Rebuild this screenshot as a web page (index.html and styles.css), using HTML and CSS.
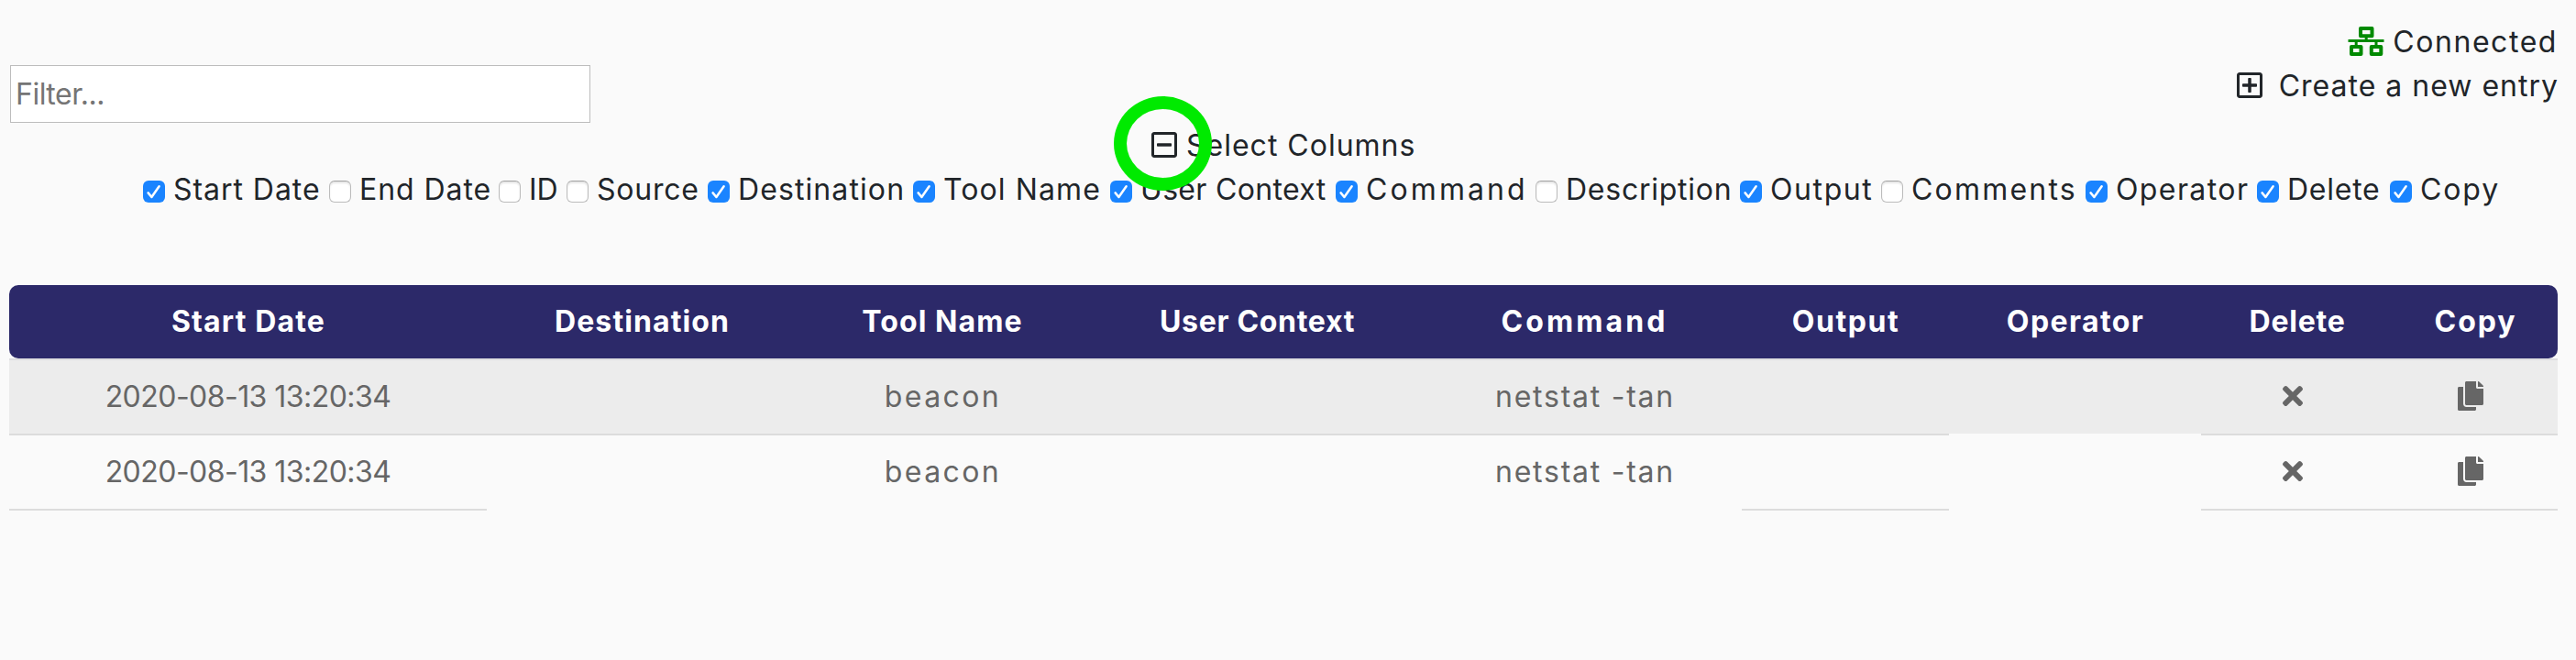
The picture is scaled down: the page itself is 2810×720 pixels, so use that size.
FILE: index.html
```html
<!DOCTYPE html>
<html lang="en">
<head>
<meta charset="utf-8">
<title>Operator log</title>
<link rel="stylesheet" href="styles.css">
</head>
<body>
<svg class="sprite" aria-hidden="true">
  <symbol id="check" viewBox="0 0 24 24"><path d="M5.6 13.4l3.8 4.6L17.6 6.2" fill="none" stroke="#fff" stroke-width="2.5" stroke-linecap="round" stroke-linejoin="round"/></symbol>
  <symbol id="times" viewBox="0 0 352 512"><path d="M242.72 256l100.07-100.07c12.28-12.28 12.28-32.19 0-44.48l-22.24-22.24c-12.28-12.28-32.19-12.28-44.48 0L176 189.28 75.93 89.21c-12.28-12.28-32.19-12.28-44.48 0L9.21 111.45c-12.28 12.28-12.28 32.19 0 44.48L109.28 256 9.21 356.07c-12.28 12.28-12.28 32.19 0 44.48l22.24 22.24c12.28 12.28 32.2 12.28 44.48 0L176 322.72l100.07 100.07c12.28 12.28 32.2 12.28 44.48 0l22.24-22.24c12.28-12.28 12.28-32.19 0-44.48L242.72 256z"/></symbol>
  <symbol id="copy" viewBox="0 0 448 512"><path d="M320 448v40c0 13.255-10.745 24-24 24H24c-13.255 0-24-10.745-24-24V120c0-13.255 10.745-24 24-24h72v296c0 30.879 25.121 56 56 56h168zm0-344V0H152c-13.255 0-24 10.745-24 24v368c0 13.255 10.745 24 24 24h272c13.255 0 24-10.745 24-24V128H344c-13.2 0-24-10.8-24-24zm120.971-31.029L375.029 7.029A24 24 0 0 0 358.059 0H352v96h96v-6.059a24 24 0 0 0-7.029-16.97z"/></symbol>
</svg>

<header class="top">
  <input class="filter" type="text" placeholder="Filter...">
  <div class="status">
    <div class="line">
      <svg class="net" viewBox="0 0 40 32"><g fill="none" stroke="#008a00" stroke-width="4" stroke-linejoin="round"><path d="M14 2h12.5v8.2H14zM4 22h10.5v8H4zM25.8 22h10.5v8H25.8z"/><path d="M0.5 15.5h39M20.2 11v4M9.2 16v5M31 16v5" stroke-width="3" stroke-linecap="butt"/></g></svg>
      <span class="connected">Connected</span>
    </div>
    <div class="line">
      <svg class="square" viewBox="0 0 448 512"><path d="M352 240v32c0 6.600-5.400 12-12 12h-88v88c0 6.600-5.400 12-12 12h-32c-6.600 0-12-5.400-12-12v-88h-88c-6.600 0-12-5.400-12-12v-32c0-6.600 5.400-12 12-12h88v-88c0-6.600 5.400-12 12-12h32c6.600 0 12 5.400 12 12v88h88c6.600 0 12 5.400 12 12zm96-160v352c0 26.500-21.500 48-48 48H48c-26.500 0-48-21.500-48-48V80c0-26.500 21.500-48 48-48h352c26.500 0 48 21.500 48 48zm-48 346V86c0-3.300-2.700-6-6-6H54c-3.300 0-6 2.700-6 6v340c0 3.300 2.700 6 6 6h340c3.300 0 6-2.700 6-6z"/></svg>
      <span class="create">Create a new entry</span>
    </div>
  </div>
</header>

<div class="toggle">
  <span class="toggle-icon">
    <svg class="square" viewBox="0 0 448 512"><path d="M108 284c-6.600 0-12-5.400-12-12v-32c0-6.600 5.400-12 12-12h232c6.600 0 12 5.400 12 12v32c0 6.600-5.400 12-12 12H108zM448 80v352c0 26.500-21.500 48-48 48H48c-26.500 0-48-21.500-48-48V80c0-26.500 21.500-48 48-48h352c26.500 0 48 21.500 48 48zm-48 346V86c0-3.300-2.700-6-6-6H54c-3.300 0-6 2.700-6 6v340c0 3.300 2.700 6 6 6h340c3.300 0 6-2.700 6-6z"/></svg>
    <span class="ring"></span>
  </span>
  <span class="select">Select Columns</span>
</div>

<div class="columns">
  <label class="col start"><span class="box on"><svg><use href="#check"/></svg></span>Start Date</label>
  <label class="col end"><span class="box"></span>End Date</label>
  <label class="col id"><span class="box"></span>ID</label>
  <label class="col source"><span class="box"></span>Source</label>
  <label class="col dest"><span class="box on"><svg><use href="#check"/></svg></span>Destination</label>
  <label class="col tool"><span class="box on"><svg><use href="#check"/></svg></span>Tool Name</label>
  <label class="col user"><span class="box on"><svg><use href="#check"/></svg></span>User Context</label>
  <label class="col command"><span class="box on"><svg><use href="#check"/></svg></span>Command</label>
  <label class="col desc"><span class="box"></span>Description</label>
  <label class="col output"><span class="box on"><svg><use href="#check"/></svg></span>Output</label>
  <label class="col comments"><span class="box"></span>Comments</label>
  <label class="col operator"><span class="box on"><svg><use href="#check"/></svg></span>Operator</label>
  <label class="col delete"><span class="box on"><svg><use href="#check"/></svg></span>Delete</label>
  <label class="col copy"><span class="box on"><svg><use href="#check"/></svg></span>Copy</label>
</div>

<table class="log">
  <colgroup><col class="w-start"><col class="w-dest"><col class="w-tool"><col class="w-user"><col class="w-command"><col class="w-output"><col class="w-operator"><col class="w-delete"><col class="w-copy"></colgroup>
  <thead>
    <tr>
      <th><span class="start">Start Date</span></th><th><span class="dest">Destination</span></th><th><span class="tool">Tool Name</span></th><th><span class="user">User Context</span></th><th><span class="command">Command</span></th><th><span class="output">Output</span></th><th><span class="operator">Operator</span></th><th><span class="delete">Delete</span></th><th><span class="copy">Copy</span></th>
    </tr>
  </thead>
  <tbody>
    <tr class="odd">
      <td><span class="date">2020-08-13 13:20:34</span></td><td></td><td><span class="beacon">beacon</span></td><td></td><td><span class="netstat">netstat -tan</span></td><td></td><td class="open"></td><td><svg class="times"><use href="#times"/></svg></td><td><svg class="copies"><use href="#copy"/></svg></td>
    </tr>
    <tr>
      <td><span class="date">2020-08-13 13:20:34</span></td><td class="open"></td><td class="open"><span class="beacon">beacon</span></td><td class="open"></td><td class="open"><span class="netstat">netstat -tan</span></td><td></td><td class="open"></td><td><svg class="times"><use href="#times"/></svg></td><td><svg class="copies"><use href="#copy"/></svg></td>
    </tr>
  </tbody>
</table>
</body>
</html>
```

FILE: styles.css
```css
* { box-sizing: border-box; }

body {
  margin: 0;
  padding: 22px 20px 0 10px;
  background: #fafafa;
  color: #212529;
  font: 32px/48px Inter, "Liberation Sans", sans-serif;
  white-space: nowrap;
  overflow: hidden;
}

svg { display: block; fill: currentColor; }
.sprite { display: none; }

/* Top bar */
.top { display: flex; justify-content: space-between; height: 113px; }
.filter {
  width: 633px;
  height: 63px;
  margin: 49px 0 0 1px;
  padding: 0 5px;
  border: 1px solid #bdbdbd;
  border-radius: 0;
  background: #fff;
  font: inherit;
  letter-spacing: -.5px;
}
.filter::placeholder { color: #757575; opacity: 1; }
.line { display: flex; justify-content: flex-end; align-items: center; height: 48px; }
.net { width: 40px; height: 32px; margin: 0 9px 2px 0; }
.square { width: 28px; height: 32px; margin-bottom: 2px; }
.connected { letter-spacing: 1.55px; }
.create { letter-spacing: 1px; margin: 0 -1px 0 18px; }

/* Column picker */
.toggle { display: flex; height: 48px; align-items: center; padding-left: 1246px; }
.toggle-icon { position: relative; }
.ring {
  position: absolute;
  left: -41px;
  top: -37px;
  width: 107px;
  height: 103px;
  border: 14px solid #00ea00;
  border-radius: 50%;
  z-index: 1;
}
.select { margin-left: 10px; letter-spacing: 1px; }
.columns {
  display: grid;
  grid-template-columns: 203px 185px 74px 154px 224px 215px 246px 218px 223px 154px 223px 187px 145px 120px;
  padding-left: 146px;
  margin-bottom: 80px;
}
.col { display: flex; align-items: center; }
.box {
  flex: none;
  width: 24px;
  height: 24px;
  margin: 4px 9px 0 0;
  border: 1px solid #bcbcbc;
  border-top-color: #a0a0a0;
  border-radius: 6px;
  background: #fff;
  box-shadow: inset 0 2px 2px #e6e6e6;
}
.box.on { border: 0; background: #1a84ff; box-shadow: none; }
.box svg { width: 24px; height: 24px; }

/* Glyph spacing of each column name */
.start { letter-spacing: .95px; }
.end { letter-spacing: .95px; }
.id { letter-spacing: -.2px; }
.source { letter-spacing: .75px; }
.dest { letter-spacing: 1.1px; }
.tool { letter-spacing: 1.1px; }
.user { letter-spacing: .33px; }
.command { letter-spacing: 3.1px; }
.desc { letter-spacing: .75px; }
.output { letter-spacing: 1.6px; }
.comments { letter-spacing: 2.2px; }
.operator { letter-spacing: 1.4px; }
.delete { letter-spacing: .75px; }
.copy { letter-spacing: 1.9px; }

/* Log table */
.log { width: 2780px; table-layout: fixed; border-collapse: separate; border-spacing: 0; }
.w-start { width: 521px; }
.w-dest { width: 338px; }
.w-tool { width: 317px; }
.w-user { width: 370px; }
.w-command { width: 344px; }
.w-output { width: 226px; }
.w-operator { width: 275px; }
.w-delete { width: 209px; }
.w-copy { width: 180px; }
.log th { height: 80px; padding: 0; background: #2c2969; color: #fff; font-weight: 700; text-align: center; }
.log th:first-child { border-radius: 10px 0 0 10px; }
.log th:last-child { border-radius: 0 10px 10px 0; }
.log th span { margin-right: -1px; }
.log th .user { letter-spacing: .7px; }
.log th .start { letter-spacing: 1.15px; }
.log td { height: 82px; padding: 0; border-bottom: 2px solid #dcdcdc; color: #666; text-align: center; }
.log .odd td { height: 84px; border-top: 2px solid #dedee0; background: #ececec; }
.log td.open, .log .odd td.open { border-bottom-color: #fafafa; }
.date { letter-spacing: -.54px; }
.beacon { letter-spacing: 2.4px; margin-right: -2px; }
.netstat { letter-spacing: 1.75px; margin-right: -2px; }
.log td svg { height: 32px; margin: 0 auto; position: relative; left: -5px; top: -1px; }
.times { width: 22px; }
.copies { width: 28px; }
```
